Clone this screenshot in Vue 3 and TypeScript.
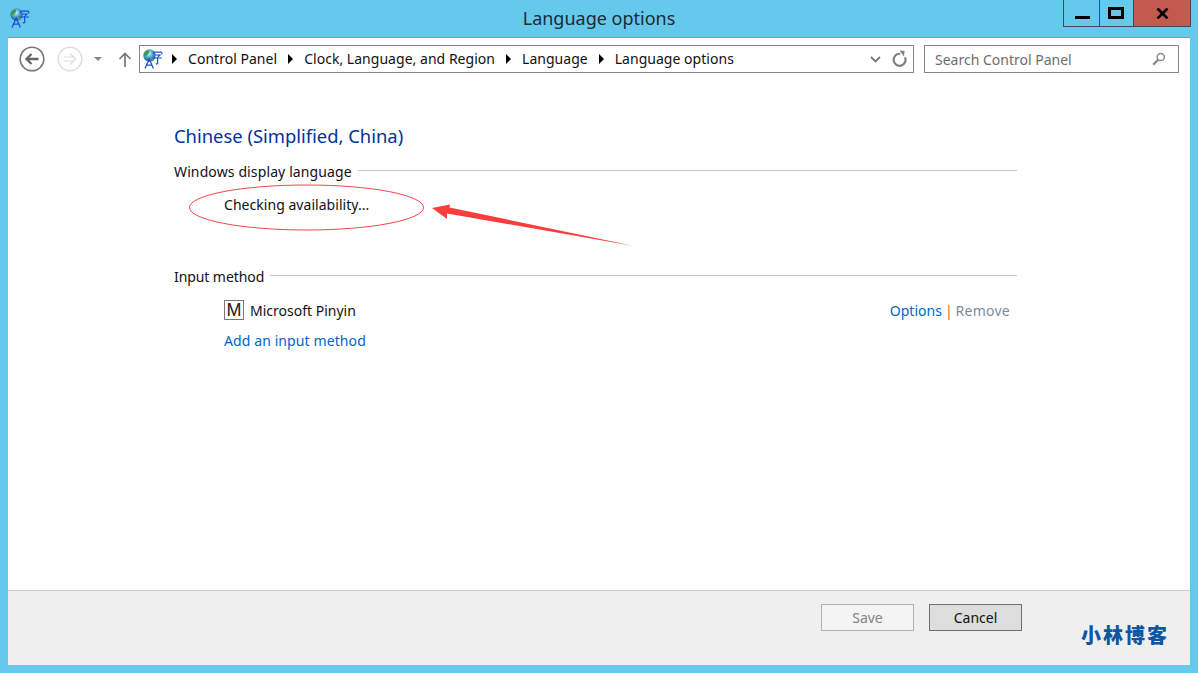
<script setup lang="ts">
const crumbs: string[] = ['Control Panel', 'Clock, Language, and Region', 'Language', 'Language options']
</script>

<template>
  <div class="window">
    <header class="titlebar">
      <svg class="app-icon" width="20" height="20" viewBox="0 0 20 20">
        <defs>
          <radialGradient id="g1" cx="0.45" cy="0.35" r="0.7">
            <stop offset="0" stop-color="#d8f2f8" />
            <stop offset="0.5" stop-color="#3f9fd0" />
            <stop offset="1" stop-color="#14528f" />
          </radialGradient>
        </defs>
        <circle cx="6.5" cy="6.5" r="6.2" fill="url(#g1)" />
        <path d="M1.5 3.5c1.5-2 3.5-2.5 5-1.5l-1 3-2.5 2-2-1z" fill="#3f9d45" />
        <path d="M8 8.5l3 .5-.5 3-3-.5z" fill="#4fa64a" />
        <path d="M11 3.2h7.5M10.5 3.2v2M18.8 3.2v2M12 6h5l-2 1.8M9.5 9h9.5M14.6 8v6.5l-1.8.6" fill="none" stroke="#1f49dc" stroke-width="1.2" />
        <path d="M2 19.5L6.2 10l4.2 9.5M3.6 16.2h5.2" fill="none" stroke="#1f49dc" stroke-width="1.3" />
      </svg>
      <h1 class="title">Language options</h1>
      <div class="winbtns">
        <div class="wb wb-min"><span class="min-glyph"></span></div>
        <div class="wb wb-max"><span class="max-glyph"></span></div>
        <div class="wb wb-close">
          <svg width="13" height="11" viewBox="0 0 13 11"><path d="M1.5 0.5L11.5 10.5M11.5 0.5L1.5 10.5" stroke="#000" stroke-width="2.6" fill="none" /></svg>
        </div>
      </div>
    </header>

    <div class="content">
      <nav class="toolbar">
        <svg class="nav-btn" width="26" height="26" viewBox="0 0 26 26">
          <circle cx="13" cy="13" r="11.8" fill="#fff" stroke="#777" stroke-width="1.6" />
          <path d="M19.5 13H8M12.5 8L7.5 13l5 5" fill="none" stroke="#666" stroke-width="2.3" />
        </svg>
        <svg class="nav-btn fwd" width="26" height="26" viewBox="0 0 26 26">
          <circle cx="13" cy="13" r="11.8" fill="#fff" stroke="#ddd" stroke-width="1.5" />
          <path d="M6.5 11h10M6.5 15h10M13 7.5l5.5 5.5-5.5 5.5" fill="none" stroke="#ddd" stroke-width="1.2" />
        </svg>
        <span class="drop"></span>
        <svg class="up" width="14" height="16" viewBox="0 0 14 16">
          <path d="M7 16V2.5M1.5 8L7 2.5 12.5 8" fill="none" stroke="#777" stroke-width="1.7" />
        </svg>
        <div class="address">
          <svg class="addr-icon" width="20" height="20" viewBox="0 0 20 20">
            <circle cx="6.5" cy="6.5" r="6.2" fill="url(#g1)" />
            <path d="M1.5 3.5c1.5-2 3.5-2.5 5-1.5l-1 3-2.5 2-2-1z" fill="#3f9d45" />
            <path d="M8 8.5l3 .5-.5 3-3-.5z" fill="#4fa64a" />
            <path d="M11 3.2h7.5M10.5 3.2v2M18.8 3.2v2M12 6h5l-2 1.8M9.5 9h9.5M14.6 8v6.5l-1.8.6" fill="none" stroke="#1f49dc" stroke-width="1.2" />
            <path d="M2 19.5L6.2 10l4.2 9.5M3.6 16.2h5.2" fill="none" stroke="#1f49dc" stroke-width="1.3" />
          </svg>
          <template v-for="c in crumbs" :key="c">
            <span class="sep"></span>
            <span class="crumb">{{ c }}</span>
          </template>
          <span class="spacer"></span>
          <svg class="chev" width="11" height="7" viewBox="0 0 11 7"><path d="M1 1l4.5 4.5L10 1" fill="none" stroke="#777" stroke-width="1.8" /></svg>
          <svg class="refresh" width="16" height="18" viewBox="0 0 16 18">
            <path d="M13 7.2a6 6 0 1 1-4.8-3.4" fill="none" stroke="#808080" stroke-width="2.2" />
            <path d="M7.5 0.5l5 0.5-0.5 5.5z" fill="#808080" />
          </svg>
        </div>
        <div class="search">
          <span>Search Control Panel</span>
          <svg width="14" height="14" viewBox="0 0 14 14">
            <circle cx="8.8" cy="5" r="3.6" fill="none" stroke="#8a8a8a" stroke-width="1.5" />
            <path d="M6.2 7.6L1.2 12.6" stroke="#8a8a8a" stroke-width="2.2" />
          </svg>
        </div>
      </nav>

      <main class="main">
        <h2 class="heading">Chinese (Simplified, China)</h2>

        <div class="group-head first"><span>Windows display language</span><i></i></div>
        <p class="checking">Checking availability...</p>

        <div class="group-head second"><span>Input method</span><i></i></div>
        <div class="method">
          <span class="m-icon">M</span>
          <span class="m-name">Microsoft Pinyin</span>
          <span class="m-actions"><a class="link">Options</a><span class="bar">|</span><a class="muted">Remove</a></span>
        </div>
        <a class="link add">Add an input method</a>
      </main>

      <footer class="footer">
        <button class="btn disabled" disabled>Save</button>
        <button class="btn cancel">Cancel</button>
      </footer>
    </div>

    <svg class="marks" width="1198" height="673" viewBox="0 0 1198 673">
      <ellipse cx="306.5" cy="207.5" rx="117" ry="22.5" fill="none" stroke="#f0484c" stroke-width="1" />
      <path d="M432 208L450 204.5 449.5 207.5 634 246 447 213.5 447 219z" fill="#fb3c3c" />
    </svg>
    <span class="watermark">小林博客</span>
  </div>
</template>

<style>
html, body { margin: 0; padding: 0; }
</style>

<style scoped>
.window {
  position: relative;
  width: 1198px;
  height: 673px;
  box-sizing: border-box;
  padding: 0 8px 8px;
  background: #65c9ec;
  display: flex;
  flex-direction: column;
  overflow: hidden;
  font-family: "Noto Sans", "Open Sans", sans-serif;
  font-size: 14px;
  color: #111;
}
.titlebar {
  height: 37px;
  flex: none;
  display: flex;
  align-items: flex-start;
  justify-content: space-between;
  position: relative;
}
.app-icon { margin: 8px 0 0 2px; }
.title {
  position: absolute;
  left: 0;
  right: 0;
  top: 6px;
  margin: 0;
  font-size: 18px;
  font-weight: 400;
  line-height: 24px;
  text-align: center;
  color: #1c2b33;
}
.winbtns {
  display: flex;
  height: 27px;
  margin-right: -1px;
  border: 1px solid #3c4a52;
  border-top: 0;
  box-sizing: border-box;
}
.wb { display: flex; align-items: center; justify-content: center; box-sizing: border-box; }
.wb-min { width: 36px; border-right: 1px solid #3c4a52; }
.wb-max { width: 33px; }
.wb-close { width: 57px; background: #c25a50; border-left: 1px solid #3c4a52; }
.min-glyph { width: 15px; height: 3px; background: #000; margin: 9px 0 0 1px; }
.max-glyph { border: 3px solid #000; margin: -1px 2px 0 0; width: 10px; height: 6px; }
.content {
  flex: 1;
  min-height: 0;
  background: #fff;
  border-top: 1px solid #7f9aa8;
  display: flex;
  flex-direction: column;
}
.toolbar {
  flex: none;
  height: 42px;
  display: flex;
  align-items: center;
  padding: 0 11px;
  box-sizing: border-box;
}
.nav-btn { flex: none; }
.fwd { margin-left: 12px; }
.drop {
  width: 0; height: 0;
  margin: 0 0 0 11px;
  border-left: 4px solid transparent;
  border-right: 4px solid transparent;
  border-top: 4px solid #888;
}
.up { margin-left: 16px; margin-right: 7px; }
.address {
  flex: none;
  width: 775px;
  height: 28px;
  box-sizing: border-box;
  border: 1px solid #828790;
  display: flex;
  align-items: center;
  padding: 0 4px 0 3px;
}
.addr-icon { margin-top: -1px; margin-right: 9px; }
.sep {
  width: 0; height: 0;
  border-top: 5px solid transparent;
  border-bottom: 5px solid transparent;
  border-left: 5px solid #000;
  margin: 0 11px 0 0;
}
.address .crumb + .sep { margin-left: 11px; }
.crumb { font-size: 14px; line-height: 20px; white-space: nowrap; letter-spacing: 0.03px; }
.spacer { flex: 1; }
.chev { margin-right: 11px; }
.refresh { margin-right: 1px; }
.search {
  flex: none;
  margin-left: 10px;
  width: 255px;
  height: 28px;
  box-sizing: border-box;
  border: 1px solid #828790;
  display: flex;
  align-items: center;
  justify-content: space-between;
  padding: 0 12px 0 10px;
  color: #6d6d6d;
}
.main {
  flex: 1;
  min-height: 0;
  padding: 0 173px 0 166px;
  display: flex;
  flex-direction: column;
}
.heading {
  margin: 42px 0 0;
  font-size: 18.4px;
  font-weight: 400;
  line-height: 28px;
  color: #003399;
}
.group-head { display: flex; align-items: center; gap: 6px; line-height: 20px; }
.group-head i { flex: 1; height: 1px; background: #c8c8c8; margin-top: -3px; }
.first { margin-top: 12px; letter-spacing: 0.12px; }
.second { margin-top: 52px; letter-spacing: -0.08px; }
.checking { margin: 13px 0 0 50px; line-height: 20px; letter-spacing: 0.04px; }
.method { display: flex; align-items: center; margin: 13px 7px 0 50px; height: 20px; }
.m-icon {
  width: 20px; height: 20px;
  box-sizing: border-box;
  border: 1px solid #777;
  font-family: "Liberation Sans", sans-serif;
  font-size: 18px;
  line-height: 18px;
  text-align: center;
  color: #222;
}
.m-name { margin-left: 6px; }
.m-actions { margin-left: auto; display: flex; gap: 3px; }
.link { color: #0066cc; }
.muted { color: #7f8a99; letter-spacing: 0.25px; }
.bar { color: #b8701a; }
.add { margin: 11px 0 0 50px; line-height: 20px; letter-spacing: 0.1px; }
.footer {
  flex: none;
  height: 75px;
  box-sizing: border-box;
  background: #efefef;
  border-top: 1px solid #cccccc;
  display: flex;
  justify-content: flex-end;
  gap: 15px;
  padding: 13px 168px 0 0;
}
.btn {
  width: 93px;
  height: 27px;
  box-sizing: border-box;
  font: inherit;
  padding: 0;
}
.disabled { background: #f4f4f4; border: 1px solid #adb2b5; color: #838383; }
.cancel { background: #dddddd; border: 1px solid #707070; color: #111; }
.marks { position: absolute; left: 0; top: 0; pointer-events: none; }
.watermark {
  position: absolute;
  left: 1081px;
  top: 621px;
  font-family: "Noto Sans CJK SC", sans-serif;
  font-size: 20px;
  font-weight: 900;
  letter-spacing: 2px;
  line-height: 28px;
  color: #0b57a4;
  white-space: nowrap;
}
</style>
